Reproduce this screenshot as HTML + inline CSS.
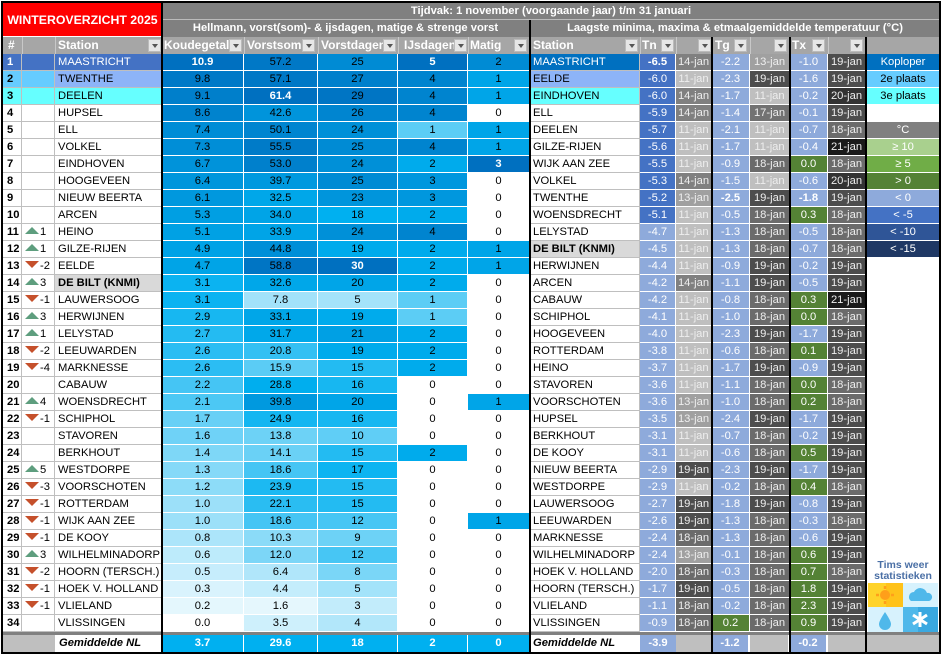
<!DOCTYPE html>
<html><head><meta charset="utf-8">
<style>
*{box-sizing:border-box;margin:0;padding:0}
body{width:942px;height:656px;background:#fff;position:relative;overflow:hidden;font-family:"Liberation Sans",Arial,sans-serif;font-size:11.2px;}
.c{position:absolute;height:17px;line-height:16px;white-space:nowrap;overflow:hidden;}
.dd{position:absolute;top:2px;width:13px;height:13px;background:#e6e6e6;border:1px solid #bbb}
.dd:after{content:"";position:absolute;left:3px;top:4px;border-left:3px solid transparent;border-right:3px solid transparent;border-top:4px solid #555}
.up{display:inline-block;width:0;height:0;border-left:7px solid transparent;border-right:7px solid transparent;border-bottom:7px solid #5e9e7e;margin:0 1px 0 3px;vertical-align:1px}
.dn{display:inline-block;width:0;height:0;border-left:7px solid transparent;border-right:7px solid transparent;border-top:7px solid #c5502b;margin:0 1px 0 3px;vertical-align:1px}
</style></head><body>
<div id="root"></div>
<script>
var L=[
[1,"","MAASTRICHT",10.9,57.2,25,5,2],[2,"","TWENTHE",9.8,57.1,27,4,1],[3,"","DEELEN",9.1,61.4,29,4,1],
[4,"","HUPSEL",8.6,42.6,26,4,0],[5,"","ELL",7.4,50.1,24,1,1],[6,"","VOLKEL",7.3,55.5,25,4,1],
[7,"","EINDHOVEN",6.7,53.0,24,2,3],[8,"","HOOGEVEEN",6.4,39.7,25,3,0],[9,"","NIEUW BEERTA",6.1,32.5,23,3,0],
[10,"","ARCEN",5.3,34.0,18,2,0],[11,"u1","HEINO",5.1,33.9,24,4,0],[12,"u1","GILZE-RIJEN",4.9,44.8,19,2,1],
[13,"d-2","EELDE",4.7,58.8,30,2,1],[14,"u3","DE BILT (KNMI)",3.1,32.6,20,2,0],[15,"d-1","LAUWERSOOG",3.1,7.8,5,1,0],
[16,"u3","HERWIJNEN",2.9,33.1,19,1,0],[17,"u1","LELYSTAD",2.7,31.7,21,2,0],[18,"d-2","LEEUWARDEN",2.6,20.8,19,2,0],
[19,"d-4","MARKNESSE",2.6,15.9,15,2,0],[20,"","CABAUW",2.2,28.8,16,0,0],[21,"u4","WOENSDRECHT",2.1,39.8,20,0,1],
[22,"d-1","SCHIPHOL",1.7,24.9,16,0,0],[23,"","STAVOREN",1.6,13.8,10,0,0],[24,"","BERKHOUT",1.4,14.1,15,2,0],
[25,"u5","WESTDORPE",1.3,18.6,17,0,0],[26,"d-3","VOORSCHOTEN",1.2,23.9,15,0,0],[27,"d-1","ROTTERDAM",1.0,22.1,15,0,0],
[28,"d-1","WIJK AAN ZEE",1.0,18.6,12,0,1],[29,"d-1","DE KOOY",0.8,10.3,9,0,0],[30,"u3","WILHELMINADORP",0.6,12.0,12,0,0],
[31,"d-2","HOORN (TERSCH.)",0.5,6.4,8,0,0],[32,"d-1","HOEK V. HOLLAND",0.3,4.4,5,0,0],[33,"d-1","VLIELAND",0.2,1.6,3,0,0],
[34,"","VLISSINGEN",0.0,3.5,4,0,0]];
var R=[
["MAASTRICHT",-6.5,14,-2.2,13,-1.0,19],["EELDE",-6.0,11,-2.3,19,-1.6,19],["EINDHOVEN",-6.0,14,-1.7,11,-0.2,20],
["ELL",-5.9,14,-1.4,17,-0.1,19],["DEELEN",-5.7,11,-2.1,11,-0.7,18],["GILZE-RIJEN",-5.6,11,-1.7,11,-0.4,21],
["WIJK AAN ZEE",-5.5,11,-0.9,18,0.0,18],["VOLKEL",-5.3,14,-1.5,11,-0.6,20],["TWENTHE",-5.2,13,-2.5,19,-1.8,19],
["WOENSDRECHT",-5.1,11,-0.5,18,0.3,18],["LELYSTAD",-4.7,11,-1.3,18,-0.5,18],["DE BILT (KNMI)",-4.5,11,-1.3,18,-0.7,18],
["HERWIJNEN",-4.4,11,-0.9,19,-0.2,19],["ARCEN",-4.2,14,-1.1,19,-0.5,19],["CABAUW",-4.2,11,-0.8,18,0.3,21],
["SCHIPHOL",-4.1,11,-1.0,18,0.0,18],["HOOGEVEEN",-4.0,11,-2.3,19,-1.7,19],["ROTTERDAM",-3.8,11,-0.6,18,0.1,19],
["HEINO",-3.7,11,-1.7,19,-0.9,19],["STAVOREN",-3.6,11,-1.1,18,0.0,18],["VOORSCHOTEN",-3.6,13,-1.0,18,0.2,18],
["HUPSEL",-3.5,13,-2.4,19,-1.7,19],["BERKHOUT",-3.1,11,-0.7,18,-0.2,19],["DE KOOY",-3.1,11,-0.6,18,0.5,19],
["NIEUW BEERTA",-2.9,19,-2.3,19,-1.7,19],["WESTDORPE",-2.9,11,-0.2,18,0.4,18],["LAUWERSOOG",-2.7,19,-1.8,19,-0.8,19],
["LEEUWARDEN",-2.6,19,-1.3,18,-0.3,18],["MARKNESSE",-2.4,18,-1.3,18,-0.6,19],["WILHELMINADORP",-2.4,13,-0.1,18,0.6,19],
["HOEK V. HOLLAND",-2.0,18,-0.3,18,0.7,18],["HOORN (TERSCH.)",-1.7,19,-0.5,18,1.8,19],["VLIELAND",-1.1,18,-0.2,18,2.3,19],
["VLISSINGEN",-0.9,18,0.2,18,0.9,19]];
var h="";
function cell(x,y,w,hh,bg,txt,st){h+='<div class="c" style="left:'+x+'px;top:'+y+'px;width:'+w+'px;height:'+hh+'px;background:'+bg+';'+(st||'')+'">'+txt+'</div>';}
function mix(a,b,t){var r=[];for(var i=0;i<3;i++)r.push(Math.round(a[i]+(b[i]-a[i])*t));return 'rgb('+r.join(',')+')';}
var W=[255,255,255],M=[0,176,240],D=[0,112,192];
function blue(v,max,mid){if(v<=0)return '#fff';var t=v/max;if(t<mid)return mix(W,M,Math.pow(t/mid,0.8));return mix(M,D,(t-mid)/(1-mid));}
var LX=[3,22,55,162,244,318,398,468,530],RX=[530,640,676,712,750,790,828,866,940];
var mids=[0.3,0.45,0.6,0.35,0.2],maxs=[10.9,61.4,30,5,3];
var rankBg={1:['#4472c4','#4472c4','#4472c4','#fff'],2:['#66ccff','#66ccff','#8db4f8','#000'],3:['#66ffff','#66ffff','#66ffff','#000']};
var gb='border-right:1px solid #bfbfbf;border-bottom:1px solid #bfbfbf;';
for(var i=0;i<34;i++){var y=54+i*17,r=L[i],rb=rankBg[r[0]];
 var b0=rb?rb[0]:'#fff',b1=rb?rb[1]:'#fff',b2=rb?rb[2]:'#fff',tc=rb?rb[3]:'#000';
 cell(3,y,19,17,b0,r[0],gb+'font-weight:bold;padding-left:4px;color:'+tc);
 var tr='';if(r[1]){tr='<span class="'+(r[1][0]=='u'?'up':'dn')+'"></span>'+r[1].slice(1);}
 cell(22,y,33,17,b1,tr,gb+'color:'+tc);
 cell(55,y,107,17,r[2]=='DE BILT (KNMI)'?'#d9d9d9':b2,r[2],gb+'padding-left:3px;color:'+tc+(r[2]=='DE BILT (KNMI)'?';font-weight:bold':''));
 for(var j=0;j<5;j++){var v=r[3+j],mx=(v==maxs[j]);var t=(j<2)?v.toFixed(1):v;
  cell(LX[3+j],y,LX[4+j]-LX[3+j],17,blue(v,maxs[j],mids[j]),t,'text-align:center;border-right:1px solid #fff;border-bottom:1px solid #fff;'+(mx?'font-weight:bold;color:#fff':''));}
}
function tcol(v){if(v>=10)return '#a9d08e';if(v>=5)return '#70ad47';if(v>=0)return '#548235';if(v<=-15)return '#1f3864';if(v<=-10)return '#2f5597';if(v<-5)return '#4472c4';return '#8eaadb';}
var dc={11:'#bfbfbf',13:'#a0a0a0',14:'#808080',17:'#727272',18:'#6b6b6b',19:'#4d4d4d',20:'#333',21:'#1a1a1a'};
var rrank={0:['#0070c0','#fff'],1:['#8db4f8','#000'],2:['#66ffff','#000']};
for(var i=0;i<34;i++){var y=54+i*17,r=R[i],rk=rrank[i];
 cell(530,y,110,17,rk?rk[0]:(r[0]=='DE BILT (KNMI)'?'#d9d9d9':'#fff'),r[0],gb+'padding-left:3px;color:'+(rk?rk[1]:'#000')+(r[0]=='DE BILT (KNMI)'?';font-weight:bold':''));
 for(var k=0;k<3;k++){var v=r[1+2*k],d=r[2+2*k];var x=RX[1+2*k];
  cell(x,y,RX[2+2*k]-x,17,tcol(v),v.toFixed(1),'text-align:center;color:#fff;border-right:1px solid #fff;border-bottom:1px solid #fff;'+(v==-6.5||v==-2.5||v==-1.8&&k==2?'font-weight:bold':''));
  cell(RX[2+2*k],y,RX[3+2*k]-RX[2+2*k],17,dc[d],d+'-jan','text-align:center;color:#eee;border-right:1px solid #fff;border-bottom:1px solid #fff;');}
}
var lg=[['#0070c0','#fff','Koploper'],['#66ccff','#000','2e plaats'],['#66ffff','#000','3e plaats'],['#fff','#000',''],['#808080','#fff','°C'],['#a9d08e','#fff','≥ 10'],['#70ad47','#fff','≥ 5'],['#548235','#fff','&gt; 0'],['#8eaadb','#fff','&lt; 0'],['#4472c4','#fff','&lt; -5'],['#2f5597','#fff','&lt; -10'],['#1f3864','#fff','&lt; -15']];
for(var i=0;i<lg.length;i++){cell(866,54+i*17,74,17,lg[i][0],lg[i][2],'text-align:center;color:'+lg[i][1]+';border-bottom:1px solid #fff');}
cell(3,3,159,34,'#ff0000','WINTEROVERZICHT 2025','color:#fff;font-weight:bold;font-size:12.3px;line-height:34px;text-align:center;border-bottom:1px solid #fff');
cell(162,3,778,17,'#808080','Tijdvak: 1 november (voorgaande jaar) t/m 31 januari','color:#fff;font-weight:bold;text-align:center;border-bottom:1px solid #bbb');
cell(162,20,368,17,'#808080','Hellmann, vorst(som)- &amp; ijsdagen, matige &amp; strenge vorst','color:#fff;font-weight:bold;text-align:center;border-right:1px solid #bbb');
cell(530,20,410,17,'#808080','Laagste minima, maxima &amp; etmaalgemiddelde temperatuur (°C)','color:#fff;font-weight:bold;text-align:center');
cell(3,37,937,17,'#a6a6a6','','');
var hd=[[3,'#',7],[58,'Station',148],[164,'Koudegetal',229],[247,'Vorstsom',302],[321,'Vorstdagen',383],[404,'IJsdagen',454],[470,'Matig',514],[533,'Station',625],[642,'Tn',661],[0,'',698],[715,'Tg',734],[0,'',774],[792,'Tx',812],[0,'',850]];
for(var i=0;i<hd.length;i++){if(hd[i][1])h+='<div class="c" style="left:'+(hd[i][0]+(i==0?5:0))+'px;top:37px;color:#fff;font-weight:bold;font-size:12px">'+hd[i][1]+'</div>';
 if(i>0)h+='<div class="dd" style="left:'+hd[i][2]+'px;top:39px"></div>';}
[22,55,162,244,318,398,468,530,640,676,712,750,790,828,866].forEach(function(x){h+='<div style="position:absolute;left:'+x+'px;top:37px;width:1px;height:17px;background:#c8c8c8"></div>';});
cell(3,632,937,3,'#808080','','');
cell(3,635,52,17,'#bfbfbf','','');
cell(55,635,107,17,'#fff','Gemiddelde NL','font-weight:bold;font-style:italic;padding-left:4px;');
var fv=['3.7','29.6','18','2','0'];for(var j=0;j<5;j++)cell(LX[3+j],635,LX[4+j]-LX[3+j],17,'#00b0f0',fv[j],'text-align:center;color:#fff;font-weight:bold;border-right:1px solid #fff');
cell(530,635,110,17,'#fff','Gemiddelde NL','font-weight:bold;font-style:italic;padding-left:3px;');
var ff=['-3.9','-1.2','-0.2'];for(var k=0;k<3;k++){cell(RX[1+2*k],635,36,17,'#8eaadb',ff[k],'text-align:center;color:#fff;font-weight:bold');cell(RX[2+2*k],635,38,17,'#bfbfbf','','');}
cell(866,635,74,17,'#bfbfbf','','');
[[161,3,2,650],[529,20,2,633],[711,37,2,615],[789,37,2,615],[865,37,2,615]].forEach(function(a){h+='<div style="position:absolute;left:'+a[0]+'px;top:'+a[1]+'px;width:'+a[2]+'px;height:'+a[3]+'px;background:#000"></div>';});
h+='<div style="position:absolute;left:866px;top:560px;width:74px;text-align:center;color:#4a6fa5;font-size:10.5px;font-weight:bold;line-height:11px;">Tims weer<br>statistieken</div>';
h+='<svg style="position:absolute;left:868px;top:583px" width="70" height="49" viewBox="0 0 70 49"><rect x="0" y="0" width="35" height="24" fill="#ffd32a"/><rect x="18" y="0" width="17" height="24" fill="#ffc21a"/><rect x="35" y="0" width="35" height="24" fill="#d7f2fd"/><rect x="0" y="24" width="35" height="25" fill="#d7f2fd"/><rect x="35" y="24" width="35" height="25" fill="#4fb8ea"/><rect x="50" y="24" width="20" height="25" fill="#3aa8e0"/>'
+'<circle cx="17" cy="12" r="5" fill="#ff9f1a"/><g stroke="#ff9f1a" stroke-width="2.5"><line x1="17" y1="3" x2="17" y2="6"/><line x1="17" y1="18" x2="17" y2="21"/><line x1="8" y1="12" x2="11" y2="12"/><line x1="23" y1="12" x2="26" y2="12"/></g>'
+'<path d="M43 18 a5 5 0 0 1 3-9 a7 7 0 0 1 13 1 a4 4 0 0 1 2 8z" fill="#4fb8ea"/>'
+'<path d="M17 29 q-6 9 -6 12 a6 6 0 0 0 12 0 q0-3 -6-12z" fill="#4fb8ea"/>'
+'<g stroke="#fff" stroke-width="3"><line x1="52" y1="29" x2="52" y2="44"/><line x1="45" y1="32" x2="59" y2="41"/><line x1="45" y1="41" x2="59" y2="32"/></g></svg>';
h+='<div style="position:absolute;left:1px;top:1px;width:940px;height:653px;border:2px solid #000"></div>';
document.getElementById('root').innerHTML=h;
</script>
</body></html>
